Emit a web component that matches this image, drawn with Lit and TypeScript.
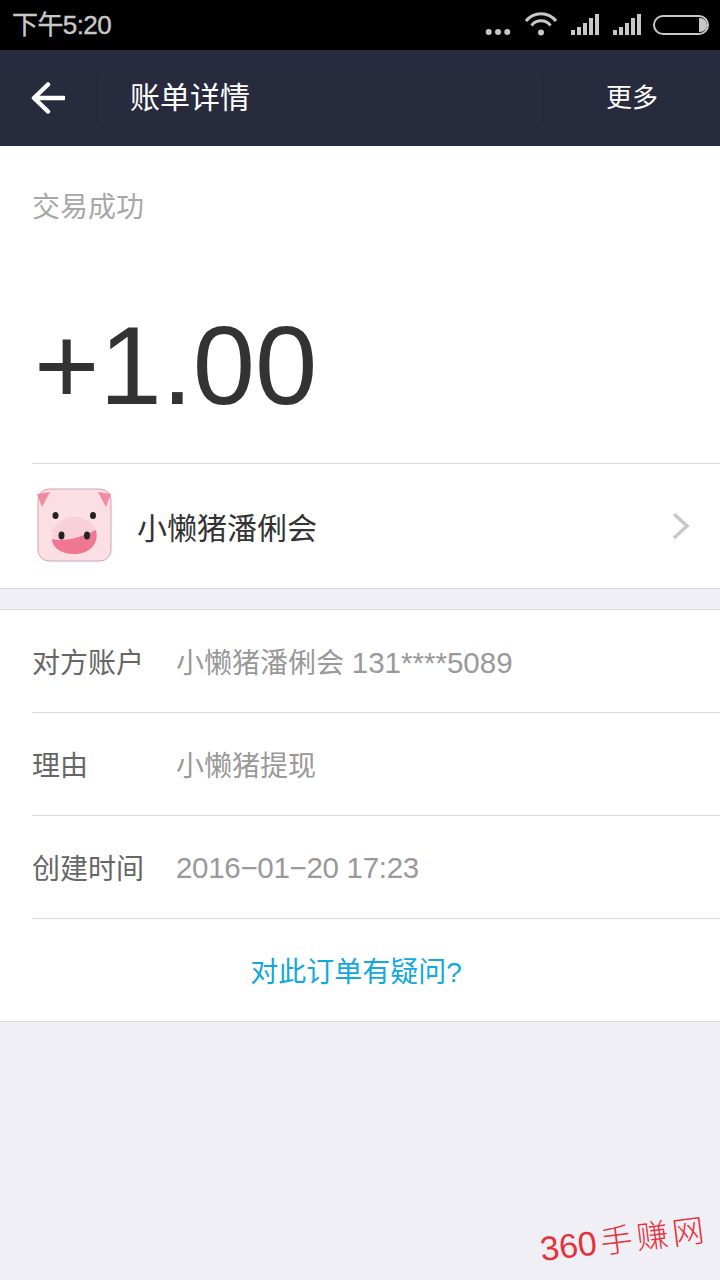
import { LitElement, html, css } from "lit";
import { customElement } from "lit/decorators.js";

@customElement("app-root")
export class AppRoot extends LitElement {
  static styles = css`
    :host { display: block; width: 720px; height: 1280px; position: relative; overflow: hidden; background: #efeff5;
      font-family: "Liberation Sans", "Noto Sans CJK SC", sans-serif; }
    .status { height: 50px; background: #000; display: flex; align-items: center; justify-content: space-between; padding: 0 11px 0 12px; box-sizing: border-box; }
    .time { color: #c8c8c8; font-size: 26px; letter-spacing: -0.6px; line-height: 50px; -webkit-text-stroke: 0.4px #c8c8c8; }
    .sicons { display: block; }
    .nav { height: 96px; background: #282b3d; display: flex; align-items: center; color: #fff; box-sizing: border-box; }
    .back { width: 97px; height: 48px; display: flex; align-items: center; padding-left: 31px; box-sizing: border-box; border-right: 1px solid #222536; }
    .title { flex: 1; padding-left: 33px; font-size: 30px; line-height: 48px; }
    .more { width: 177px; height: 48px; border-left: 1px solid #222536; box-sizing: border-box; font-size: 26px; line-height: 48px; padding-left: 62px; }
    .top { background: #fff; height: 443px; border-bottom: 1px solid #d9d9d9; box-sizing: border-box; padding-left: 32px; display: flex; flex-direction: column; }
    .state { color: #a8a8a8; font-size: 28px; line-height: 40px; margin-top: 42px; }
    .amount { color: #333; font-size: 112px; line-height: 130px; margin-top: 73px; height: 162px; padding-left: 2px; font-weight: 400; }
    .payee { flex: 1; border-top: 1px solid #d9d9d9; display: flex; align-items: center; }
    .avatar { width: 82px; height: 80px; display: block; }
    .pname { font-size: 30px; color: #333; margin-left: 23px; flex: 1; }
    .chev { margin-right: 30px; display: block; }
    .details { background: #fff; margin-top: 20px; border-top: 1px solid #d9d9d9; border-bottom: 1px solid #d9d9d9; padding-left: 32px; }
    .row { height: 103px; display: flex; align-items: center; border-bottom: 1px solid #d9d9d9; box-sizing: border-box; font-size: 28px; }
    .label { color: #666; width: 144px; }
    .val { color: #999; }
    .num { font-size: 29.5px; }
    .date { font-size: 29.5px; letter-spacing: -0.3px; padding-top: 2px; }
    .link { height: 102px; margin-left: -32px; display: flex; align-items: center; justify-content: center; color: #12a8e0; font-size: 28px; padding-right: 8px; box-sizing: border-box; }
    .mark { position: absolute; left: 543px; top: 1225px; color: #e8303a; display: flex; align-items: baseline; transform: rotate(-7deg); transform-origin: left bottom; font-size: 34px; line-height: 44px; white-space: nowrap; }
    .mark .cn { font-family: "Noto Sans CJK SC", sans-serif; font-weight: 300; font-size: 32px; margin-left: 4px; letter-spacing: 4px; }
  `;

  render() {
    return html`
      <div class="status">
        <span class="time">下午5:20</span>
        <svg class="sicons" width="224" height="30" viewBox="0 0 224 30">
          <g fill="#c8c8c8">
            <circle cx="3.700" cy="22" r="3"/><circle cx="13" cy="22" r="3"/><circle cx="22.300" cy="22" r="3"/>
            <circle cx="56" cy="22.500" r="3"/>
            <rect x="86" y="20" width="4" height="5"/><rect x="92" y="17" width="4" height="8"/><rect x="98" y="13" width="4" height="12"/><rect x="104" y="8" width="4" height="17"/><rect x="110" y="4" width="4" height="21"/>
            <rect x="128" y="20" width="4" height="5"/><rect x="134" y="17" width="4" height="8"/><rect x="140" y="13" width="4" height="12"/><rect x="146" y="8" width="4" height="17"/><rect x="152" y="4" width="4" height="21"/>
            <path d="M214 8h1a6.500 6.500 0 0 1 0 14h-1z"/>
          </g>
          <g fill="none" stroke="#c8c8c8" stroke-width="3">
            <path d="M41 11a19 19 0 0 1 30 0"/>
            <path d="M46.500 15.500a12 12 0 0 1 19 0"/>
          </g>
          <rect x="169" y="6" width="54" height="18" rx="9" fill="none" stroke="#c8c8c8" stroke-width="2"/>
        </svg>
      </div>
      <div class="nav">
        <div class="back">
          <svg width="34" height="34" viewBox="0 0 34 34" fill="none" stroke="#fff" stroke-width="4.500" stroke-linecap="round" stroke-linejoin="round">
            <path d="M17 3.500 3 17l14 13.500M4 17h29" />
          </svg>
        </div>
        <div class="title">账单详情</div>
        <div class="more">更多</div>
      </div>
      <div class="top">
        <div class="state">交易成功</div>
        <div class="amount">+1.00</div>
        <div class="payee">
          <svg class="avatar" viewBox="12 7 82 80">
            <rect x="12" y="7" width="82" height="80" fill="#fffdfd"/>
            <rect x="18" y="10" width="73" height="72" rx="11" fill="#fbdfe5" stroke="#c9a9b0"/>
            <path d="M17 15 30 13 22 28z M91 15 78 13 86 28z" fill="#f38aa0"/>
            <ellipse cx="35.500" cy="36.500" rx="3" ry="3.500" fill="#222"/><ellipse cx="73" cy="36.500" rx="3" ry="3.500" fill="#222"/>
            <ellipse cx="54.500" cy="56.500" rx="22.500" ry="18.500" fill="#f8d0da"/>
            <path d="M32 60c14 3 30-2 44-9 3 14-6 24-22 24-14 0-22-7-22-15z" fill="#ef7792"/>
            <ellipse cx="41.500" cy="56.500" rx="3" ry="4" fill="#222"/><ellipse cx="67" cy="56.500" rx="3" ry="4" fill="#222"/>
          </svg>
          <span class="pname">小懒猪潘俐会</span>
          <svg class="chev" width="18" height="28" viewBox="0 0 18 28" fill="none" stroke="#c8c8c8" stroke-width="3.500"><path d="M2 2l13 12L2 26"/></svg>
        </div>
      </div>
      <div class="details">
        <div class="row"><span class="label">对方账户</span><span class="val">小懒猪潘俐会 <span class="num">131****5089</span></span></div>
        <div class="row"><span class="label">理由</span><span class="val">小懒猪提现</span></div>
        <div class="row"><span class="label">创建时间</span><span class="val date">2016−01−20 17:23</span></div>
        <div class="link">对此订单有疑问?</div>
      </div>
      <div class="mark"><span>360</span><span class="cn">手赚网</span></div>
    `;
  }
}
